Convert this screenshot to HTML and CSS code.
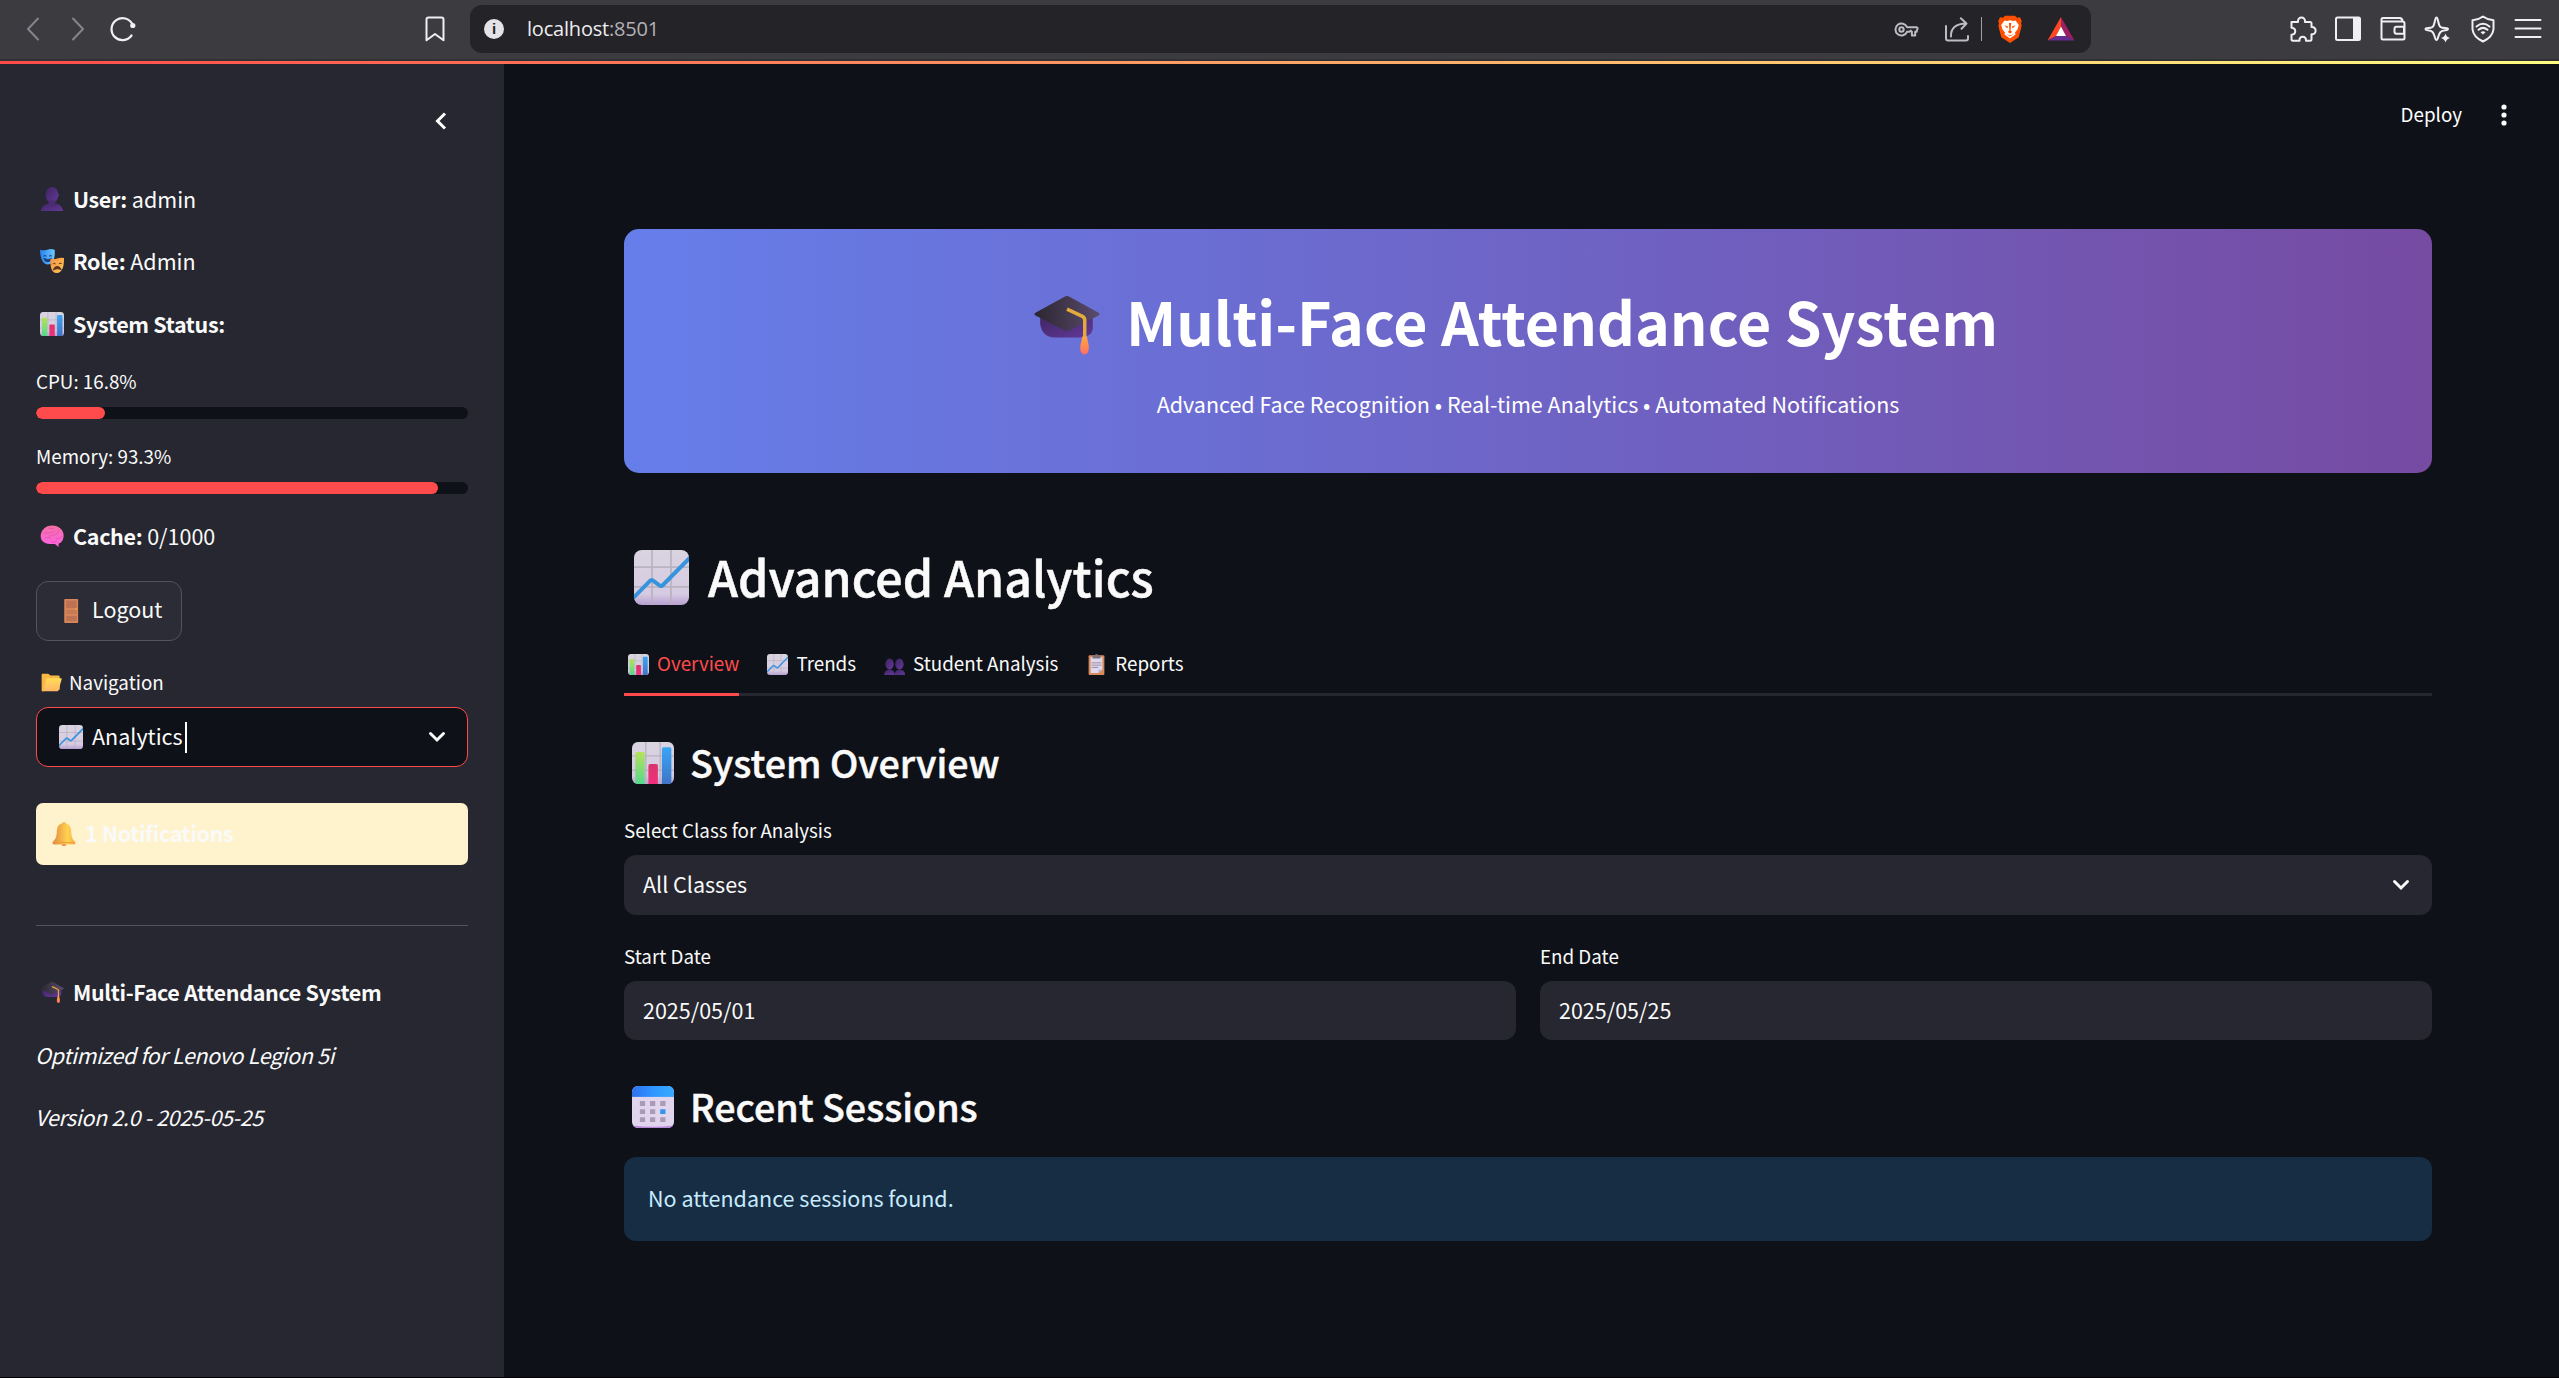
FILE: index.html
```
<!DOCTYPE html>
<html lang="en">
<head>
<meta charset="utf-8">
<title>Multi-Face Attendance System</title>
<link rel="stylesheet" href="styles.css">
</head>
<body>
<svg class="defs" width="0" height="0" aria-hidden="true">
  <defs>
    <linearGradient id="paper" x1="0" y1="0" x2="0" y2="1"><stop offset="0" stop-color="#d9d4e0"/><stop offset=".8" stop-color="#d6cbe2"/><stop offset="1" stop-color="#b79fd0"/></linearGradient>
    <linearGradient id="green" x1="0" y1="0" x2="0" y2="1"><stop offset="0" stop-color="#b4e25a"/><stop offset="1" stop-color="#56d88e"/></linearGradient>
    <linearGradient id="pink" x1="0" y1="0" x2="0" y2="1"><stop offset="0" stop-color="#d9356c"/><stop offset="1" stop-color="#f0307c"/></linearGradient>
    <linearGradient id="blue" x1="0" y1="0" x2="0" y2="1"><stop offset="0" stop-color="#3aa5f5"/><stop offset="1" stop-color="#3f74c8"/></linearGradient>
    <linearGradient id="purple" x1="0" y1="0" x2="1" y2="1"><stop offset="0" stop-color="#3e2560"/><stop offset="1" stop-color="#63399a"/></linearGradient>
    <linearGradient id="board" x1="0" y1="0" x2="1" y2="0"><stop offset="0" stop-color="#2b2631"/><stop offset="1" stop-color="#5b4b6b"/></linearGradient>
    <linearGradient id="tassel" x1="0" y1="0" x2="0" y2="1"><stop offset="0" stop-color="#ffa83f"/><stop offset="1" stop-color="#ff6f62"/></linearGradient>
    <linearGradient id="gold" x1="0" y1="0" x2="1" y2="0"><stop offset="0" stop-color="#e2873f"/><stop offset=".65" stop-color="#ffd350"/><stop offset="1" stop-color="#f7a94a"/></linearGradient>
    <linearGradient id="folder" x1="0" y1="0" x2="0" y2="1"><stop offset="0" stop-color="#ffdc56"/><stop offset="1" stop-color="#ffb567"/></linearGradient>
    <linearGradient id="maskblue" x1="0" y1="0" x2="1" y2="0"><stop offset="0" stop-color="#2a7ff0"/><stop offset="1" stop-color="#6ccbff"/></linearGradient>
    <linearGradient id="maskgold" x1="0" y1="0" x2="1" y2="1"><stop offset="0" stop-color="#f79048"/><stop offset="1" stop-color="#ffcb4d"/></linearGradient>
    <linearGradient id="brain" x1="0" y1="0" x2="0" y2="1"><stop offset="0" stop-color="#f76fa6"/><stop offset="1" stop-color="#ff62e8"/></linearGradient>
    <linearGradient id="calhead" x1="0" y1="0" x2="1" y2="0"><stop offset="0" stop-color="#2f6ff0"/><stop offset=".5" stop-color="#2f96ff"/><stop offset="1" stop-color="#35aaff"/></linearGradient>
  </defs>
  <symbol id="i-bars" viewBox="0 0 32 32">
    <clipPath id="sheet"><rect width="32" height="32" rx="4.5"/></clipPath>
    <g clip-path="url(#sheet)"><rect width="32" height="32" fill="url(#paper)"/>
    <path d="M10.5 0v32M21.5 0v32M0 10.5h32M0 21.5h32" stroke="#b9b2c0" stroke-width="1"/>
    <path d="M2.5 32V9q0-1.300 1.300-1.300h4.600q1.300 0 1.300 1.300v23z" fill="url(#green)"/>
    <path d="M12.500 32V18q0-1.300 1.300-1.300h4.600q1.300 0 1.300 1.300v14z" fill="url(#pink)"/>
    <path d="M22.800 32V5.300q0-1.300 1.300-1.300h4.600q1.300 0 1.300 1.300V32z" fill="url(#blue)"/></g>
  </symbol>
  <symbol id="i-line" viewBox="0 0 32 32">
    <g clip-path="url(#sheet)"><rect width="32" height="32" fill="url(#paper)"/>
    <path d="M10.500 0v32M21.500 0v32M0 10h32M0 21.500h32" stroke="#b9b2c0" stroke-width="1"/>
    <path d="M-1 28.500L9.300 18q1-1 2 0l3.400 2.500q1 1 2 0L33 4" fill="none" stroke="#3793dc" stroke-width="2.300"/></g>
  </symbol>
  <symbol id="i-user" viewBox="0 0 32 32">
    <ellipse cx="16" cy="10.500" rx="8.500" ry="10.500" fill="url(#purple)"/><path d="M1 32q1.500-8 9-10h12q7.500 2 9 10z" fill="url(#purple)"/><path d="M11.500 18h9v6q-4.500 2.500-9 0z" fill="#4a2c74"/><circle cx="7.800" cy="11" r="1.500" fill="#3f2662"/><circle cx="24.200" cy="11" r="1.500" fill="#5c358d"/>
  </symbol>
  <symbol id="i-users" viewBox="0 0 32 32">
    <g fill="url(#purple)"><ellipse cx="8.500" cy="15.500" rx="6.300" ry="8.500"/><ellipse cx="23.500" cy="15.500" rx="6.300" ry="8.500"/><path d="M0 32q.5-6 5-7.500h7Q16 26 16.500 32z"/><path d="M16 32q.5-6 4.500-7.500h7Q32 26 32 32z"/></g>
  </symbol>
  <symbol id="i-masks" viewBox="0 0 32 32">
    <path d="M0 1q5 1.500 9.500 0 5-2 10 0c.8 8-.5 19.500-9.500 19.500C3 20.500 0 10 0 1z" fill="url(#maskblue)"/>
    <path d="M4.500 9.500q2-2 4 0M12 9.500q2-2 4 0M5 12.500q5.500 3 10.500 0-1.500 4.500-5.300 4.500T5 12.500z" fill="#173a70" stroke="#173a70" stroke-width="1"/>
    <path d="M14 13q4.500 1 9-.5 4.500-1.500 9-.5c0 9-1 20-10 20-7 0-8.500-9-8-19z" fill="url(#maskgold)"/>
    <path d="M17 20q2-1.500 4 0M25 19.500q2-1.500 4 0M17.500 28q2-5 5.500-5t5.500 4.500q-5.500-2.500-11 .5z" fill="#5a2f24" stroke="#5a2f24" stroke-width="1"/>
  </symbol>
  <symbol id="i-brain" viewBox="0 0 32 32">
    <path d="M1 18C0 8 8 2 16 2c9 0 16 6 15.500 14-.4 7-4 9.500-6.500 10l-.5 4.500-4.500-4C10 27.500 2 25 1 18z" fill="url(#brain)"/>
    <path d="M4 13q4-2 8-1t8-3M11 5q3 2 7 1M24 7q2 5-3 7t-9 2M6 19q5-3 9 1M21 19q4 2 8-2M15 24q5 1 8-2" fill="none" stroke="#d855a4" stroke-width="1"/>
  </symbol>
  <symbol id="i-door" viewBox="0 0 32 32">
    <rect x="7" width="18.500" height="32" rx="1" fill="#d8855a"/><rect x="9.500" y="2" width="14" height="10" fill="#bd7353"/><rect x="9.500" y="14.500" width="14" height="5.500" fill="#c67b56"/><rect x="9.500" y="22.500" width="14" height="7" fill="#bd7353"/><circle cx="23" cy="13.500" r="1.300" fill="#ffa52e"/>
  </symbol>
  <symbol id="i-folder" viewBox="0 0 32 32">
    <path d="M1 4q0-1.500 1.500-1.500h8.500l3.500 3h12q2 0 2 2V27L2 29.500q-1 0-1-1.500z" fill="#f9b844"/><path d="M8 11q.5-1.500 2-1.500h20.500q1.500 0 1 1.500l-5 17q-.5 1.500-2 1.500H2q1.500-.5 2-2z" fill="url(#folder)"/>
  </symbol>
  <symbol id="i-bell" viewBox="0 0 32 32">
    <circle cx="16" cy="29.500" r="2.800" fill="#f0824c"/><circle cx="16" cy="2.300" r="2.300" fill="#f6b246"/><path d="M16 1.500c6.500 0 9 4 9.500 10 .5 9 1.500 10.500 5 14.500 1.500 2 1 4-1.500 4H3c-2.500 0-3-2-1.500-4 3.500-4 4.500-5.500 5-14.500.5-6 3-10 9.500-10z" fill="url(#gold)"/><path d="M2 27.500h28" stroke="#e79643" stroke-width="1.200"/>
  </symbol>
  <symbol id="i-cap" viewBox="0 0 32 32">
    <path d="M3 10.500h25.500v8q-.8 4-6.500 4H10q-6 0-7-6.500z" fill="url(#purple)"/><path d="M14.800 2.800q1.200-.8 2.400 0L31.300 10.500q1 .7 0 1.400L17.300 19q-1.300.7-2.600 0L.7 11.900q-1-.7 0-1.400z" fill="url(#board)"/><path d="M16 8.800l7.500 3.500q1.100.6 1.100 1.900V23" fill="none" stroke="#e3aa3c" stroke-width="1.700"/><path d="M23.400 22h2.300q.2 2 .8 4 .5 4.500-2 4.800-2.500-.3-2-4.800.7-2 .9-4z" fill="url(#tassel)"/>
  </symbol>
  <symbol id="i-clip" viewBox="0 0 32 32">
    <rect x="4" y="2" width="24" height="30" rx="1.500" fill="#d98a58"/><path d="M7 5h18v19l-6 5H7z" fill="#dfd8ea"/><path d="M25 24l-6 5v-5z" fill="#b9a9d0"/><path d="M8.500 13.500h15M8.500 17h15M8.500 20.500h10" stroke="#877a96" stroke-width="1.200"/><path d="M10 7V3.500q0-1.200 1.500-1.200H13Q14 0 16 0t3 2.300h1.500Q22 2.300 22 3.500V7z" fill="#7a727f"/>
  </symbol>
  <symbol id="i-cal" viewBox="0 0 32 32">
    <g clip-path="url(#sheet)"><rect width="32" height="32" fill="#e1d5ee"/><path d="M0 30q16 2 32 0v2H0z" fill="#b988dc"/><rect width="32" height="8.300" fill="url(#calhead)"/><path d="M6 11.500h4v3.700H6zM13.700 11.500h4v3.700h-4zM21.500 11.500h4v3.700h-4zM6 17.700h4v3.700H6zM13.700 17.700h4v3.700h-4zM6 23.800h4v3.700H6zM13.700 23.800h4v3.700h-4zM21.500 23.800h4v3.700h-4z" fill="#a99bb6"/><path d="M21.500 17.700h4v3.700h-4z" fill="#2f96f0"/></g>
  </symbol>
</svg>

<header class="toolbar">
  <svg class="tb dim" viewBox="0 0 28 28"><path d="M19 3.500L9 14l10 10.500"/></svg>
  <svg class="tb dim" viewBox="0 0 28 28"><path d="M9 3.500L19 14 9 24.500"/></svg>
  <svg class="tb reload" viewBox="0 0 28 28"><path d="M22.500 20.500a11 11 0 1 1 1-11"/><circle class="solid" cx="23.800" cy="10.500" r="2.600"/></svg>
  <svg class="tb mark" viewBox="0 0 28 28"><path d="M5.500 4.500q0-2 2-2h13q2 0 2 2v20.800L14 19l-8.500 6.300z"/></svg>
  <div class="address">
    <span class="info">i</span>
    <span class="url">localhost<span class="port">:8501</span></span>
    <svg class="tb soft key" viewBox="0 0 28 28"><path d="M14 12.200A6 6 0 1 0 14 16.800h2.500l1.200-1.200 1.200 1.200v3.700h3.300v-3.700h1.500v-1l1-2.600-1-1z"/><circle cx="8.500" cy="14.500" r="2.200"/></svg>
    <svg class="tb soft share" viewBox="0 0 28 28"><path d="M3 11v12.500q0 2 2 2h18q2 0 2-2V21M8 21.500C7.500 13 13.500 8.500 23 8.500M17.800 3.300L23.500 8.500l-5 5.300"/></svg>
    <span class="bar"></span>
    <svg class="tb brave" viewBox="0 0 28 28"><path fill="#ff4f00" d="M9 .7h10l2 2 3-.5 1.800 4-.8 2 .7 2.500-3 11.500L14 28l-8.700-5.800-3-11.500.7-2.500-.8-2 1.800-4 3 .5z"/><path fill="#fff" d="M8.500 5.500L11 6l3-.8L17 6l2.500-.5 3.300 4.500-1.300 4.500-2.500 3 .5 2-5.500 4-5.500-4 .5-2-2.500-3L5.200 10z"/><path fill="#ff4f00" d="M8.300 10.300l3.700 1.300-.6 1.900zM19.700 10.300L16 11.600l.6 1.900zM12.900 8h2.200l-.5 7.500 1.600 1.500-2.200 1.400-2.200-1.400 1.600-1.500zM10.300 19l3.700 1.500 3.700-1.500-3.700 2.600z"/></svg>
    <svg class="tb bat" viewBox="0 0 28 28"><path fill="#ff4724" d="M14 2v10l-4.800 9L.5 25.500z"/><path fill="#9e1f63" d="M14 2l13.500 23.500-8.700-4.500L14 12z"/><path fill="#662d91" d="M.5 25.500L9.200 21h9.600l8.700 4.500z"/><path fill="#fff" d="M14 11.500L9 21h10z"/></svg>
  </div>
  <div class="actions">
    <svg class="tb" viewBox="0 0 28 28"><path d="M2.500 7h6.500c-.7-6 7.700-6 7 0h5q1.500 0 1.500 1.500V12c5.500-.5 5.500 8 0 7.300v5q0 1.500-1.500 1.500h-4c.7-5.500-7.300-5.500-6.500 0H4q-1.500 0-1.500-1.500v-4.500c5-.3 5-6.700 0-7z"/></svg>
    <svg class="tb" viewBox="0 0 28 28"><rect x="2" y="2.500" width="24" height="22.500" rx="1.500"/><path class="solid" d="M19 3h7v22h-7z"/></svg>
    <svg class="tb" viewBox="0 0 28 28"><path d="M2.500 4.500q0-1.500 1.500-1.500h16.500q3 0 3 3.500M2.500 4.500V23q0 1.500 1.500 1.500h20q1.500 0 1.500-1.500V8.500q0-2-2-2H4M25 11.800h-7.500q-2 0-2 2v3q0 2 2 2H25z"/></svg>
    <svg class="tb" viewBox="0 0 28 28"><path d="M12.500 2.500c1.700 0 1.500 7.500 4 9.500s7.500 0 7.500 2-5 .5-7.500 3-2.300 8-4 8-1.500-5.500-4-8-7-1-7-3 4.500 0 7-2 2.300-9.500 4-9.500z"/><path class="solid" d="M21.500 18.500q.8 3.500 4.500 4.500-3.700 1-4.500 4.500-.8-3.500-4.500-4.500 3.700-1 4.500-4.500z"/></svg>
    <svg class="tb" viewBox="0 0 28 28"><path d="M14 1.500q4.500 3.300 10.500 3.800v9Q23.500 22 14 26.500 4.500 22 3.500 14.300v-9Q9.500 4.800 14 1.500zM7.500 11.500q6.500-5.500 13 0M9.500 14.800q4.500-3.800 9 0"/><path class="solid" d="M14 19.500l-2.500-2.300q2.500-1.700 5 0z"/></svg>
    <svg class="tb" viewBox="0 0 28 28"><path d="M1.500 5h25M1.500 13.500h25M1.500 22h25"/></svg>
  </div>
</header>
<div class="decoration"></div>

<div class="app">
  <aside class="sidebar">
    <div class="collapse"><svg width="16" height="20" viewBox="0 0 16 20"><path d="M12 2.500L4.500 10l7.500 7.500"/></svg></div>
    <p class="row user"><svg class="emo"><use href="#i-user"/></svg><span><b>User:</b> admin</span></p>
    <p class="row role"><svg class="emo"><use href="#i-masks"/></svg><span><b>Role:</b> Admin</span></p>
    <p class="row status"><svg class="emo"><use href="#i-bars"/></svg><b>System Status:</b></p>
    <div class="meter cpu"><span>CPU: 16.8%</span><div class="track"><div class="fill" style="width:16%"></div></div></div>
    <div class="meter"><span>Memory: 93.3%</span><div class="track"><div class="fill" style="width:93%"></div></div></div>
    <p class="row cache"><svg class="emo"><use href="#i-brain"/></svg><span><b>Cache:</b> 0/1000</span></p>
    <button class="logout"><svg class="emo"><use href="#i-door"/></svg><span>Logout</span></button>
    <label class="navlabel"><svg class="emo small"><use href="#i-folder"/></svg><span>Navigation</span></label>
    <div class="navselect"><svg class="emo"><use href="#i-line"/></svg><span>Analytics</span><i class="caret"></i><svg class="chev" viewBox="0 0 18 12"><path d="M2.500 2.500L9 9l6.500-6.500"/></svg></div>
    <div class="notice"><svg class="emo"><use href="#i-bell"/></svg><b>1 Notifications</b></div>
    <hr>
    <p class="row brand"><svg class="emo"><use href="#i-cap"/></svg><b>Multi-Face Attendance System</b></p>
    <p class="row note opt"><em>Optimized for Lenovo Legion 5i</em></p>
    <p class="row note ver"><em>Version 2.0 - 2025-05-25</em></p>
  </aside>

  <main class="main">
    <div class="menu"><span>Deploy</span><svg width="8" height="22" viewBox="0 0 8 22"><circle cx="4" cy="3" r="2.600"/><circle cx="4" cy="11" r="2.600"/><circle cx="4" cy="19" r="2.600"/></svg></div>
    <section class="banner">
      <h1><svg class="cap"><use href="#i-cap"/></svg><span>Multi-Face Attendance System</span></h1>
      <p>Advanced Face Recognition • Real-time Analytics • Automated Notifications</p>
    </section>
    <h2 class="title"><svg><use href="#i-line"/></svg><span>Advanced Analytics</span></h2>
    <nav class="tabs">
      <a class="tab active"><svg><use href="#i-bars"/></svg><span>Overview</span></a>
      <a class="tab"><svg><use href="#i-line"/></svg><span>Trends</span></a>
      <a class="tab"><svg><use href="#i-users"/></svg><span>Student Analysis</span></a>
      <a class="tab"><svg><use href="#i-clip"/></svg><span>Reports</span></a>
    </nav>
    <h3 class="overview"><svg><use href="#i-bars"/></svg><span>System Overview</span></h3>
    <label class="field">Select Class for Analysis</label>
    <div class="box select"><span>All Classes</span><svg class="chev" viewBox="0 0 18 12"><path d="M2.500 2.500L9 9l6.500-6.500"/></svg></div>
    <div class="dates">
      <div><label class="field">Start Date</label><div class="box"><span>2025/05/01</span></div></div>
      <div><label class="field">End Date</label><div class="box"><span>2025/05/25</span></div></div>
    </div>
    <h3 class="recent"><svg><use href="#i-cal"/></svg><span>Recent Sessions</span></h3>
    <div class="alert">No attendance sessions found.</div>
  </main>
</div>
</body>
</html>
```
FILE: styles.css
```
* { box-sizing: border-box; margin: 0; padding: 0; }
body {
  width: 2559px; height: 1378px; overflow: hidden;
  display: flex; flex-direction: column;
  background: #000; color: #fafafa;
  font-family: "Noto Sans CJK JP", "Noto Sans", sans-serif;
  font-size: 21.5px; line-height: 36px; white-space: nowrap;
}
.defs { position: absolute; }
b { font-weight: 700; letter-spacing: -.34px; }
svg { flex: none; display: block; }

/* browser toolbar */
.toolbar {
  height: 61px; flex: none; display: flex; align-items: center;
  padding: 0 17px 1px 19px; gap: 17px;
  background: #3c3b3f; border-bottom: 2px solid #303035;
}
.tb { width: 28px; height: 28px; fill: none; stroke: #f0f0f3; stroke-width: 2; stroke-linejoin: round; stroke-linecap: round; }
.tb .solid { fill: #f0f0f3; stroke: none; }
.tb.dim { stroke: #85848a; }
.tb.reload { stroke-width: 2.2; }
.tb.mark { margin-left: 267px; }
.tb.soft { stroke: #bdbcc2; }
.tb.brave, .tb.bat { stroke: none; }
.address {
  width: 1621px; height: 48px; margin-left: 4px; padding: 0 16px 0 14px;
  display: flex; align-items: center; border-radius: 12px; background: #242328;
}
.info {
  width: 20px; height: 20px; border-radius: 50%; background: #e4e3e8; color: #242328;
  font: 700 15px/20px "Liberation Sans", sans-serif; text-align: center;
}
.url { margin-left: 23px; flex: 1; font: 20px/28px "Open Sans", sans-serif; letter-spacing: -.2px; color: #ededf0; }
.port { color: #b2b1b8; }
.share { margin-left: 22px; }
.bar { width: 1px; height: 24px; margin: 0 14px 0 10px; background: #a09fa6; }
.bat { margin-left: 23px; }
.actions { display: flex; gap: 17px; margin-left: auto; }
.decoration { height: 3px; flex: none; background: linear-gradient(90deg, #ff4b4b, #fffd80); }

.app { height: 1313px; display: flex; }

/* sidebar */
.sidebar { width: 504px; padding: 0 36px; background: #262730; display: flex; flex-direction: column; }
.collapse { height: 20px; margin: 47px 19px 0 0; display: flex; justify-content: flex-end; }
.collapse svg { fill: none; stroke: #fff; stroke-width: 3; }
.row { height: 36px; display: flex; align-items: center; }
.emo { width: 24px; height: 24px; margin: 0 9px 0 4px; }
.emo.small { width: 21px; height: 21px; margin: 0 7px 0 5px; }
.user { margin-top: 50px; }
.role { margin-top: 26px; }
.status { margin-top: 27px; }
.meter { margin-top: 22px; font-size: 18.8px; line-height: 30px; }
.meter.cpu { margin-top: 24px; }
.meter span { display: block; height: 30px; }
.track { height: 12px; margin-top: 11px; border-radius: 6px; background: #0e1117; overflow: hidden; }
.fill { height: 12px; border-radius: 6px; background: #ff4b4b; }
.cache { margin-top: 24px; }
.logout {
  width: 146px; height: 60px; margin-top: 27px; padding-left: 18px;
  display: flex; align-items: center; border: 1px solid #52535b; border-radius: 12px;
  background: #2b2c36; color: #fafafa; font: inherit;
}
.logout span { padding-bottom: 4px; }
.navlabel { height: 30px; margin-top: 26px; display: flex; align-items: center; font-size: 18.8px; }
.navselect {
  height: 60px; margin-top: 10px; padding: 0 21px 0 18px; display: flex; align-items: center;
  border: 1px solid #ff4b4b; border-radius: 12px; background: #0e1117;
}
.navselect span, .notice b, .box span { padding-bottom: 2px; }
.chev { width: 18px; height: 12px; margin-left: auto; fill: none; stroke: #fafafa; stroke-width: 3; stroke-linecap: round; }
.caret { width: 2px; height: 31px; margin-left: 2px; background: #fff; }
.notice {
  height: 62px; margin-top: 36px; padding-left: 12px; display: flex; align-items: center;
  border-radius: 7px; background: #fff3cd;
}
hr { height: 1px; margin-top: 60px; border: 0; background: #51525a; }
.brand { margin-top: 48px; }
.note { letter-spacing: -.36px; }
.note em { margin-left: -1px; }
.opt { margin-top: 27px; }
.ver { margin-top: 26px; }

/* main column */
.main { width: 2055px; padding: 0 127px 0 120px; background: #0e1117; display: flex; flex-direction: column; }
.menu {
  height: 30px; margin: 36px -76px 0 0; display: flex; justify-content: flex-end; align-items: center;
  gap: 38px; font-size: 18.8px; color: #fff;
}
.menu span { padding-bottom: 2px; }
.menu svg { fill: #fafafa; }
.banner {
  height: 244px; margin-top: 99px; border-radius: 15px;
  background: linear-gradient(90deg, #667eea, #764ba2); color: #fff;
  display: flex; flex-direction: column; align-items: center;
}
h1 { height: 80px; margin-top: 52px; padding-right: 24px; display: flex; align-items: center; font-size: 59px; line-height: 80px; }
.cap { width: 66px; height: 66px; margin: 6px 26px 0 0; }
.banner p { margin-top: 25px; }
h2, h3 { font-weight: 500; display: flex; align-items: center; -webkit-text-stroke: .5px #fafafa; }
.title { height: 72px; margin-top: 68px; padding-left: 10px; font-size: 48.3px; line-height: 68px; }
.title span { padding-bottom: 3px; }
.title svg { width: 55px; height: 55px; margin-right: 19px; }
.tabs { height: 59px; margin-top: 24px; display: flex; gap: 24px; border-bottom: 3px solid #262730; font-size: 18.8px; }
.tab { height: 59px; padding: 0 0 5px 4px; display: flex; align-items: center; }
.tab svg { width: 21px; height: 21px; margin-right: 8px; }
.tab span { padding-bottom: 2px; }
.active { color: #ff4b4b; border-bottom: 3px solid #ff4b4b; padding-bottom: 2px; }
.overview, .recent { height: 54px; padding-left: 8px; font-size: 37.6px; line-height: 50px; }
.overview svg, .recent svg { width: 42px; height: 42px; margin-right: 16px; }
.overview span, .recent span { padding-bottom: 3px; }
.overview { margin-top: 40px; }
.field { display: block; height: 30px; font-size: 18.8px; line-height: 30px; }
.overview + .field { margin-top: 25px; }
.box { height: 60px; padding: 0 22px 0 19px; display: flex; align-items: center; border-radius: 12px; background: #262730; margin-top: 10px; }
.dates { margin-top: 26px; display: flex; gap: 24px; }
.dates > div { flex: 1; }
.dates .box { height: 59px; }
.recent { margin-top: 40px; }
.alert { height: 84px; margin-top: 23px; padding: 0 24px 3px; display: flex; align-items: center; border-radius: 12px; background: #172d43; color: #c7ebff; }
```
